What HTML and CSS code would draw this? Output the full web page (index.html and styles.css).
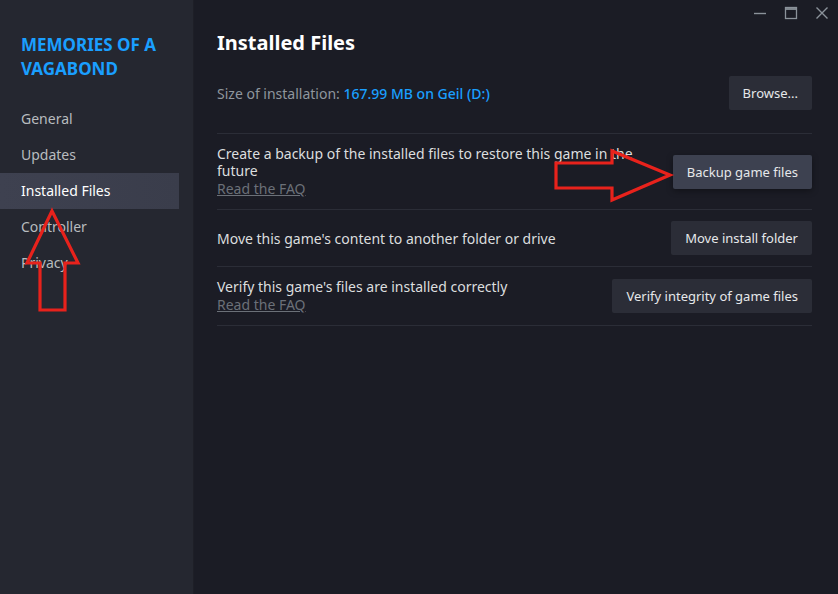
FILE: index.html
```html
<!DOCTYPE html>
<html lang="en">
<head>
    <meta charset="UTF-8">
    <title>Properties</title>
    <link rel="stylesheet" href="styles.css">
</head>
<body>
    <div class="win">
        <div class="side">
            <div class="game">MEMORIES OF A VAGABOND</div>
            <div class="nav">General</div>
            <div class="nav">Updates</div>
            <div class="nav sel">Installed Files</div>
            <div class="nav">Controller</div>
            <div class="nav">Privacy</div>
        </div>
        <div class="main">
            <div class="bar">
                <svg class="ctl" width="14" height="14" viewBox="0 0 14 14"><path d="M1 7.5h12" stroke="#8b929a" stroke-width="1.4"/></svg>
                <svg class="ctl" width="14" height="14" viewBox="0 0 14 14"><rect x="1.5" y="1.5" width="11" height="11" fill="none" stroke="#8b929a" stroke-width="1.3"/><path d="M1.5 3h11" stroke="#8b929a" stroke-width="1.8"/></svg>
                <svg class="ctl" width="14" height="14" viewBox="0 0 14 14"><path d="M1.5 1.5l11 11M12.5 1.5l-11 11" stroke="#8b929a" stroke-width="1.4"/></svg>
            </div>
            <h1>Installed Files</h1>
            <div class="size">
                <div>Size of installation: <span class="blue">167.99 MB on Geil (D:)</span></div>
                <div class="btn">Browse...</div>
            </div>
            <div class="row">
                <div class="txt">
                    Create a backup of the installed files to restore this game in the future
                    <div class="faq">Read the FAQ</div>
                </div>
                <div class="btn hov">Backup game files</div>
            </div>
            <div class="row">
                <div class="txt">Move this game's content to another folder or drive</div>
                <div class="btn">Move install folder</div>
            </div>
            <div class="row">
                <div class="txt">
                    Verify this game's files are installed correctly
                    <div class="faq">Read the FAQ</div>
                </div>
                <div class="btn">Verify integrity of game files</div>
            </div>
        </div>
        <svg class="arrows" width="838" height="594" viewBox="0 0 838 594">
            <polygon points="52,211 78,263 65,263 65,310 40,310 40,263 27,263" fill="none" stroke="#e8221c" stroke-width="3.2" stroke-linejoin="miter"/>
            <polygon points="556,163 612,163 612,151 670,175 612,200 612,188 556,188" fill="none" stroke="#e8221c" stroke-width="3.2" stroke-linejoin="miter"/>
        </svg>
    </div>
</body>
</html>
```

FILE: styles.css
```css
*{
    margin:0;
    padding:0;
    box-sizing:border-box;
}
body{
    background:#1b1c25;
    font-family:"Noto Sans","Liberation Sans",sans-serif;
    font-size:14px;
    color:#dcdedf;
}
.win{
    position:relative;
    display:flex;
    width:838px;
    height:594px;
    overflow:hidden;
}
.side{
    width:194px;
    flex:none;
    background:#252730;
    border-right:1px solid #1e1f27;
    padding-top:33px;
    padding-right:14px;
}
.game{
    padding:0 21px;
    color:#1a9fff;
    font-weight:bold;
    font-size:17px;
    line-height:24px;
    margin-bottom:20px;
}
.nav{
    height:36px;
    line-height:36px;
    padding-left:21px;
    color:#b8bcbf;
    font-size:14px;
}
.sel{
    background:linear-gradient(90deg,#3e4150,#3a3d4b);
    color:#fff;
}
.main{
    flex:1;
    padding:0 26px 0 23px;
}
.bar{
    height:28px;
    display:flex;
    justify-content:flex-end;
    align-items:center;
    gap:17px;
    margin-right:-17px;
    padding-bottom:2px;
}
h1{
    font-size:20px;
    font-weight:bold;
    color:#fff;
    line-height:28px;
    margin-top:1px;
}
.size{
    display:flex;
    justify-content:space-between;
    align-items:center;
    margin-top:19px;
    padding-bottom:23px;
    border-bottom:1px solid #2b2d37;
    color:#8f969e;
}
.blue{
    color:#1a9fff;
    font-weight:500;
}
.row{
    display:flex;
    justify-content:space-between;
    align-items:center;
    padding:11px 0;
    border-bottom:1px solid #2b2d37;
    line-height:17px;
}
.txt{
    flex:1;
    max-width:440px;
}
.faq{
    color:#6b7078;
    text-decoration:underline;
    line-height:19px;
}
.btn{
    flex:none;
    height:34px;
    line-height:34px;
    padding:0 14px;
    background:#2b2d37;
    color:#e6e8ea;
    font-size:13px;
    border-radius:2px;
}
.hov{
    background:#3d4150;
    box-shadow:0 2px 6px rgba(0,0,0,0.35);
}
.arrows{
    position:absolute;
    left:0;
    top:0;
    pointer-events:none;
}
```
